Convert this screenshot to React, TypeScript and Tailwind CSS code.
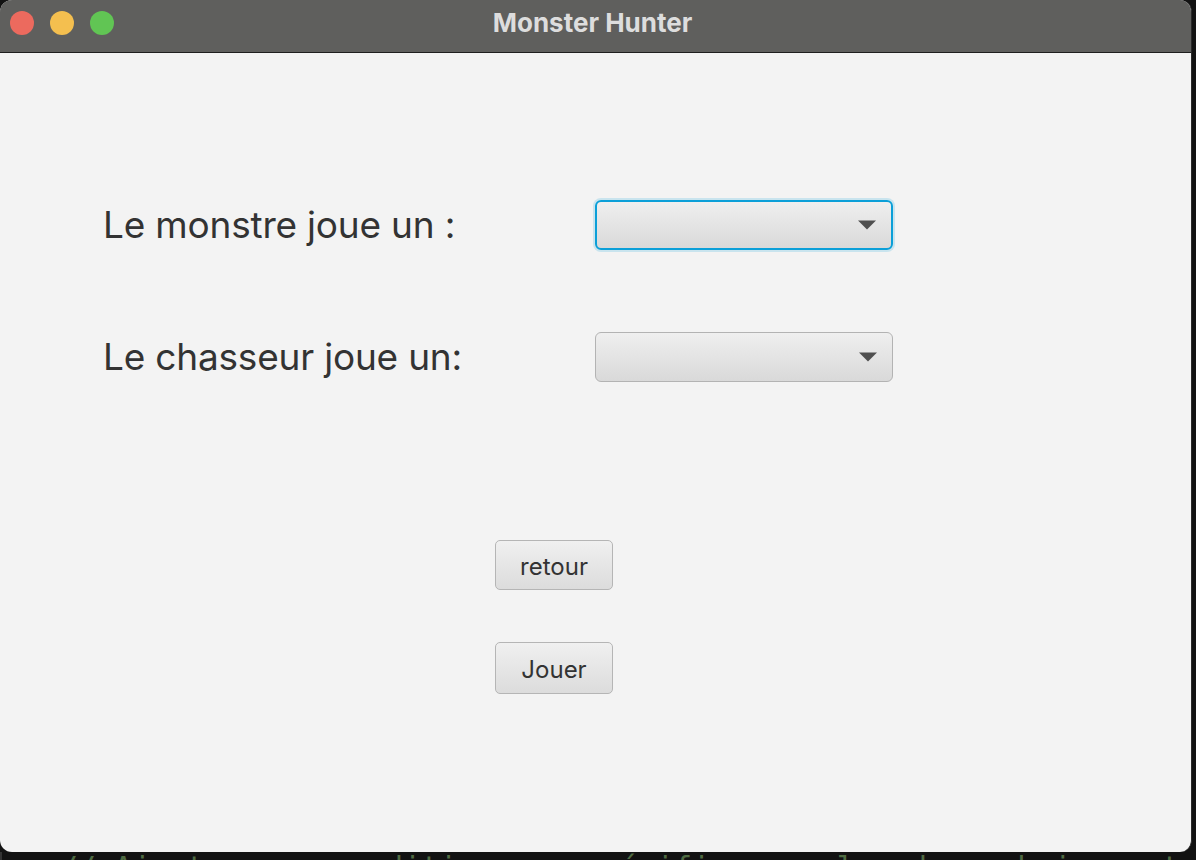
// Monster Hunter — JavaFX style selection window

function ComboBox({ focused }: { focused?: boolean }) {
  return (
    <div
      className={
        focused
          ? 'relative w-[298px] h-[50px] rounded-[6px] border-2 border-[#0b9fd8] shadow-[0_0_0_2px_rgba(11,159,216,0.18)] bg-gradient-to-b from-[#efefef] to-[#d9d9d9]'
          : 'relative w-[298px] h-[50px] rounded-[6px] border border-[#b3b3b3] bg-gradient-to-b from-[#efefef] to-[#d9d9d9]'
      }
    >
      <div className="absolute right-[15px] top-1/2 -translate-y-1/2 w-0 h-0 border-l-[9px] border-r-[9px] border-t-[9px] border-l-transparent border-r-transparent border-t-[#4f4f4f]" />
    </div>
  );
}

function Button({ label, tall }: { label: string; tall?: boolean }) {
  return (
    <button
      className={
        (tall ? 'h-[52px] ' : 'h-[50px] ') +
        'w-[118px] rounded-[5px] border border-[#b5b5b5] bg-gradient-to-b from-[#f0f0f0] to-[#dcdcdc] text-[24px] text-[#333333] font-["Inter",sans-serif] leading-none pt-[3px]'
      }
    >
      {label}
    </button>
  );
}

export default function App() {
  return (
    <div className="w-[1196px] h-[860px] bg-[#121212] overflow-hidden flex flex-col">
      {/* ── Window ─────────────────────────────────────────────── */}
      <div className="w-[1192px] h-[852px] shrink-0 rounded-[12px] overflow-hidden flex flex-col bg-[#f3f3f3] border-r border-[#2a2a2a]">
        {/* Title bar */}
        <div className="relative h-[53px] shrink-0 bg-[#5f5f5d] border-b border-[#1e1e1e] flex items-center justify-center">
          <div className="absolute left-[10px] top-[11px] flex gap-[16px]">
            <span className="w-[24px] h-[24px] rounded-full bg-[#ec6a5e]" />
            <span className="w-[24px] h-[24px] rounded-full bg-[#f4bf4f]" />
            <span className="w-[24px] h-[24px] rounded-full bg-[#61c554]" />
          </div>
          <span className="text-[26px] font-bold text-[#dddddd] font-['Inter',sans-serif] -mt-[8px] -ml-[6px]">
            Monster Hunter
          </span>
        </div>

        {/* Content */}
        <div className="flex-1 flex flex-col pl-[103px] pt-[147px] font-['Inter',sans-serif] text-[#333333]">
          <div className="flex items-center h-[50px]">
            <span className="w-[492px] text-[37px] tracking-[-0.2px]">Le monstre joue un :</span>
            <ComboBox focused />
          </div>
          <div className="flex items-center h-[50px] mt-[82px]">
            <span className="w-[492px] text-[37px] tracking-[-0.2px]">Le chasseur joue un:</span>
            <ComboBox />
          </div>
          <div className="flex flex-col pl-[392px] mt-[158px] gap-[52px]">
            <Button label="retour" />
            <Button label="Jouer" tall />
          </div>
        </div>
      </div>

      {/* ── Editor behind the window ───────────────────────────── */}
      <div className="flex-1 flex overflow-hidden">
        <div className="w-[15px] border-r border-[#333]" />
        <div className="w-[70px] border-r border-[#333]" />
        <div className="pl-[58px] mt-[1px] whitespace-nowrap font-['DejaVu_Sans_Mono',monospace] text-[30px] leading-none text-[#4f6b42]">
          // Ajouter une condition pour vérifier que les deux choix sont différents
        </div>
      </div>
    </div>
  );
}
